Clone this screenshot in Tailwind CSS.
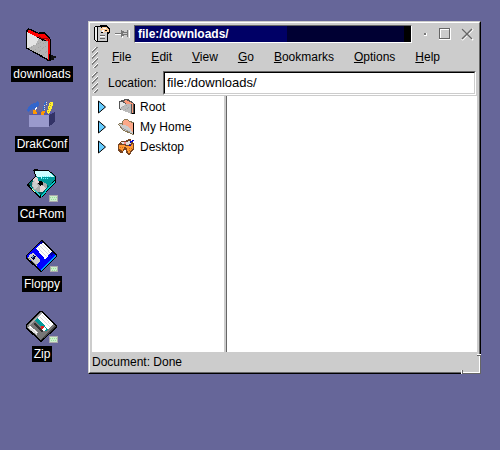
<!DOCTYPE html>
<html lang="en">
<head>
  <meta charset="UTF-8" />
  <meta name="viewport" content="width=device-width, initial-scale=1.0" />
  <title>file:/downloads/</title>
  <script src="https://cdn.jsdelivr.net/npm/@tailwindcss/browser@4"></script>
</head>

<body class="bg-[#666699] font-['Liberation_Sans',Arial,sans-serif] text-xs text-black">
  <div class="flex h-screen overflow-hidden">

    <!-- desktop icons -->
    <nav class="flex w-[84px] shrink-0 flex-col items-center gap-[14px] pt-[26px] leading-4 text-white">
      <a href="#downloads" class="flex flex-col items-center">
        <svg class="h-10 w-12" viewBox="54 33 144 120" shape-rendering="crispEdges">
          <path d="M147 120h12v3h9v6h-6v6h-12z" fill="#111" />
          <path d="M78 46l6-6 7 1 24 12 7-1h12l17 18 2 10-1 57h-9l-65-37z" fill="#000" />
          <path d="M83 46l5-2 30 14 7-2 8 1 17 18-2 60-5 1V78l-24-9-36-17z" fill="#f00" />
          <path d="M81 51l38 20 6 6h19v55l-63-34z" fill="#b4b4b4" />
          <path d="M81 51l36 19-9 18-27 12z" fill="#e4e4e4" />
          <path d="M88 100l50-28M100 108l42-29M112 114l30-25M126 122l17-15" stroke="#999" stroke-width="2" stroke-dasharray="3 3" />
          <path d="M118 64l8 7h17l3 6" fill="none" stroke="#900" stroke-width="3" />
        </svg>
        <span class="bg-black px-[2px]">downloads</span>
      </a>
      <a href="#drakconf" class="flex flex-col items-center">
        <svg class="h-10 w-12" viewBox="54 18 144 120" shape-rendering="crispEdges">
          <path d="M87 75l18-9h60l-18 9z" fill="#5858a8" />
          <path d="M81 63l3-12 9-9 12-3 6-6 6 3v12l-9 6-9 3-9 3-6 6z" fill="#3366cc" />
          <path d="M99 60h9l3 12H99zM123 66l6-6 6 3-3 12h-9z" fill="#f90" />
          <path d="M105 58l6-5" stroke="#fff" stroke-width="3" />
          <path d="M130 62l3-15 6-12" stroke="#3366cc" stroke-width="5" fill="none" />
          <path d="M132 59l3-15M138 46l3-9" stroke="#ddd" stroke-width="3" stroke-dasharray="3 3" />
          <path d="M141 69l3-18 6-15h9v9l-6 15-6 12z" fill="#fe3" />
          <path d="M153 39l-3 12-6 15" stroke="#a80" stroke-width="2" stroke-dasharray="3 3" fill="none" />
          <path d="M87 75h60v35H87z" fill="#9999cc" />
          <path d="M147 75l18-9v30l-18 14z" fill="#333366" />
        </svg>
        <span class="bg-black px-[2px]">DrakConf</span>
      </a>
      <a href="#cdrom" class="flex flex-col items-center">
        <svg class="h-10 w-12" viewBox="54 18 144 120" shape-rendering="crispEdges">
          <path d="M81 72l25-24-7-18 6-2 41 2 22 19v18l-42 45-8 1-37-36z" fill="#000" />
          <path d="M85 73l30-29 48 17-40 46z" fill="#066" />
          <path d="M121 108l44-47v6l-40 43z" fill="#0cc" />
          <circle cx="119" cy="73" r="23" fill="#aaa" />
          <path d="M119 73l-22-12 8-8 12-4zM121 73l18 12-9 9-9 3z" fill="#e5d5d5" />
          <path d="M103 60l-6 16 8 12 10-10z" fill="#ccc" />
          <path d="M103 32h42l21 18v6l-20 24-12-12-18-5z" fill="#099" />
          <path d="M103 32h42l19 18h-24l-15 3-15-3z" fill="#cff" />
          <path d="M126 50h30M123 56h24" stroke="#6ff" stroke-width="3" stroke-dasharray="3 3" />
          <circle cx="122" cy="70" r="7" fill="#000" />
          <path d="M90 78l31 29" stroke="#3cc" stroke-width="3" />
          <path d="M95 84l9 8v5l-9-8z" fill="#ff9" />
          <path d="M147 105h27v21h-27z" fill="#aaa" />
          <path d="M150 108h21v15h-21z" fill="#cec" />
          <path d="M150 111h21M153 117h18" stroke="#9d9" stroke-width="3" stroke-dasharray="3 3" />
        </svg>
        <span class="bg-black px-[2px]">Cd-Rom</span>
      </a>
      <a href="#floppy" class="flex flex-col items-center">
        <svg class="h-10 w-12" viewBox="54 12 144 120" shape-rendering="crispEdges">
          <path d="M78 69l45-45h5l43 42v8l-44 45h-7L78 79z" fill="#000" />
          <path d="M81 71l43-43 43 42-43 45-43-39z" fill="#00f" />
          <path d="M122 114l45-45v5l-42 42z" fill="#09f" />
          <path d="M124 28l38 37-6 7-39-38z" fill="#009" />
          <path d="M108 49l21-18 26 27-19 25z" fill="#fff" />
          <path d="M113 45l27 30M119 40l26 28M125 35l25 27" stroke="#ccc" stroke-width="2" />
          <path d="M86 72l12-10 24 22-12 17-25-21z" fill="#ccc" />
          <path d="M86 78l24 22" stroke="#888" stroke-width="3" />
          <path d="M93 75l7-6 8 5-7 10z" fill="#003" />
          <path d="M96 76l5-3" stroke="#69c" stroke-width="3" />
          <path d="M150 102h24v18h-24z" fill="#aaa" />
          <path d="M153 105h18v12h-18z" fill="#cec" />
          <path d="M153 108h18M156 114h15" stroke="#9d9" stroke-width="3" stroke-dasharray="3 3" />
        </svg>
        <span class="bg-black px-[2px]">Floppy</span>
      </a>
      <a href="#zip" class="flex flex-col items-center">
        <svg class="h-10 w-12" viewBox="54 12 144 120" shape-rendering="crispEdges">
          <path d="M78 69l43-43h6l44 44v6l-45 43h-6L78 79z" fill="#000" />
          <path d="M81 71l43-43 43 44-43 43-43-39z" fill="#777" />
          <path d="M84 69l39-39 4 4-39 39z" fill="#aaa" />
          <path d="M104 56l22-22 34 33-22 22z" fill="#099" />
          <path d="M114 48l14-15 32 34-16 15z" fill="#fff" />
          <path d="M120 45l28 29M126 39l26 28" stroke="#ccc" stroke-width="2" />
          <path d="M104 61l-3 6 25 24 6-4z" fill="#333" />
          <path d="M122 71h9v9h-9z" fill="#d22" />
          <path d="M125 83l7-8 6 6-7 8z" fill="#fff" />
          <path d="M84 75l7-4 22 20-4 8-23-19z" fill="#ddd" />
          <path d="M90 73l22 21" stroke="#fff" stroke-width="3" />
          <path d="M124 113l43-41" stroke="#444" stroke-width="4" />
          <path d="M147 102h27v21h-27z" fill="#aaa" />
          <path d="M150 105h21v15h-21z" fill="#cec" />
          <path d="M150 108h21M153 114h18" stroke="#9d9" stroke-width="3" stroke-dasharray="3 3" />
        </svg>
        <span class="bg-black px-[2px]">Zip</span>
      </a>
    </nav>

    <!-- file manager window -->
    <main class="relative mt-[21px] mr-[19px] mb-[76px] ml-1 flex min-w-0 flex-1 border border-t-[#cccccc] border-r-black border-b-black border-l-[#cccccc]">
      <div class="flex min-w-0 flex-1 flex-col border border-t-white border-r-[#666666] border-b-[#666666] border-l-white bg-[#cccccc]">

        <header class="flex h-[22px] items-center pr-1 pl-1">
          <button class="h-[18px] w-4" aria-label="Window menu">
            <svg class="h-[18px] w-4" viewBox="27 30 48 54" shape-rendering="crispEdges">
              <path d="M30 33h12l3-3h18l12 9v12l-6 6v24H36l-9-6V36z" fill="#000" />
              <path d="M30 36h6v42l-6-3z" fill="#eee" />
              <path d="M39 36h9v6h18v36H39z" fill="#ccc" />
              <path d="M45 42l6-6h12l9 6v9H60l-6 3z" fill="#fc9" />
              <path d="M54 39h9v3h-9zM51 45h6v6h-6z" fill="#fff" />
              <path d="M60 46h6M48 53h6" stroke="#000" stroke-width="3" />
              <path d="M45 61h15v6H45z" fill="#fff" />
              <path d="M45 60h15M45 70h15" stroke="#666" stroke-width="3" />
            </svg>
          </button>
          <button class="ml-1 h-[18px] w-4" aria-label="Sticky">
            <svg class="h-[18px] w-4" viewBox="84 30 48 54" shape-rendering="crispEdges">
              <path d="M87 58h18M109 69V48M129 45v24" stroke="#fff" stroke-width="3" />
              <path d="M87 55h18" stroke="#777" stroke-width="3" />
              <path d="M105 45h3v21h-3zM108 48h3l3 3h6l3-3v-3h3v21h-3v-3l-3-3h-6l-3 3h-3z" fill="#777" />
              <path d="M111 54h12v3h-12z" fill="#ccc" />
            </svg>
          </button>
          <h1 class="ml-1 h-[18px] min-w-0 flex-1 border border-t-[#666666] border-r-white border-b-white border-l-[#666666] bg-linear-to-r from-[#000066] from-55% via-[#000033] via-55% to-[#000033] to-98% pl-[3px] font-bold leading-4 text-white">
            <span class="flex justify-between">file:/downloads/<i class="h-4 w-[7px] bg-black"></i></span>
          </h1>
          <div class="ml-[3px] flex">
            <button class="h-[18px] w-5" aria-label="Minimize">
              <svg class="h-[18px] w-5" viewBox="0 0 20 18" shape-rendering="crispEdges">
                <path d="M9 8h3v3H9z" fill="#fff" />
                <path d="M9 8h2v2H9z" fill="#777" />
              </svg>
            </button>
            <button class="h-[18px] w-5" aria-label="Maximize">
              <svg class="h-[18px] w-5" viewBox="0 0 20 18" shape-rendering="crispEdges">
                <path d="M5.500 4.500h9v9h-9z" fill="none" stroke="#fff" />
                <path d="M4.500 3.500h10v10h-10z" fill="none" stroke="#666" />
                <path d="M4 14.500h11.500V3" fill="none" stroke="#fff" />
              </svg>
            </button>
            <button class="h-[18px] w-5" aria-label="Close">
              <svg class="h-[18px] w-5" viewBox="0 0 20 18">
                <path d="M7 4l11 11M18 4L7 15" stroke="#fff" stroke-width="2" />
                <path d="M7 4l10 10M17 4L7 14" stroke="#666" stroke-width="1.500" />
              </svg>
            </button>
          </div>
        </header>

        <div class="flex h-6 items-center pl-[2px]">
          <svg class="h-[21px] w-[6px]" shape-rendering="crispEdges" aria-hidden="true">
            <defs>
              <pattern id="grip" width="6" height="6" patternUnits="userSpaceOnUse">
                <path d="M0 3h1v1H0zM1 2h1v1H1zM2 1h1v1H2zM3 0h1v1H3zM4 5h1v1H4zM5 4h1v1H5z" fill="#fff" />
                <path d="M0 4h1v2H0zM1 3h1v2H1zM2 2h1v2H2zM3 1h1v2H3zM4 0h1v2H4zM5 5h1v1H5zM5 0h1v1H5z" fill="#808080" />
              </pattern>
            </defs>
            <rect width="6" height="21" fill="url(#grip)" />
          </svg>
          <div class="ml-[14px] flex gap-5">
            <button><u>F</u>ile</button>
            <button><u>E</u>dit</button>
            <button><u>V</u>iew</button>
            <button><u>G</u>o</button>
            <button><u>B</u>ookmarks</button>
            <button><u>O</u>ptions</button>
            <button><u>H</u>elp</button>
          </div>
        </div>

        <div class="flex h-[27px] items-center pr-[3px] pl-[2px]">
          <svg class="h-[21px] w-[6px]" shape-rendering="crispEdges" aria-hidden="true">
            <rect width="6" height="21" fill="url(#grip)" />
          </svg>
          <label for="location" class="ml-[10px] w-[55px]">Location:</label>
          <div class="flex h-6 min-w-0 flex-1 border border-t-[#666666] border-r-white border-b-white border-l-[#666666]">
            <input id="location" type="text" value="file:/downloads/" class="w-full min-w-0 border border-t-black border-r-[#cccccc] border-b-[#cccccc] border-l-black bg-white pl-[2px] text-[13px] outline-none" />
          </div>
        </div>

        <div class="flex min-h-0 flex-1 pr-[2px] pl-[2px]">
          <ul class="w-[132px] shrink-0 bg-white pt-px">
            <li>
              <button class="flex h-5 w-full items-center pl-[6px]">
                <svg class="h-[14px] w-2" viewBox="0 0 8 14"><path d="M.5 1v12L7.500 7z" fill="#6cf" stroke="#000" /></svg>
                <svg class="ml-3 h-[18px] w-[18px]" viewBox="99 21 54 54" shape-rendering="crispEdges">
                  <path d="M102 30l9-3 9-3h9l15 9 3 6v24l3 6h-9l-39-15z" fill="#555" />
                  <path d="M105 33h6l12 6h15v30l-33-15z" fill="#bbb" />
                  <path d="M105 33h6l12 6-18 12z" fill="#e5e5e5" />
                  <path d="M114 30l9-3 6 3 12 6 3 3v27h-3V39h-15z" fill="#fb9b7b" />
                  <path d="M108 51l18-9M120 57l15-9" stroke="#999" stroke-width="2" stroke-dasharray="3 3" />
                  <path d="M147 39v27h-6" stroke="#000" stroke-width="3" fill="none" />
                </svg>
                <span class="ml-1">Root</span>
              </button>
            </li>
            <li>
              <button class="flex h-5 w-full items-center pl-[6px]">
                <svg class="h-[14px] w-2" viewBox="0 0 8 14"><path d="M.5 1v12L7.500 7z" fill="#6cf" stroke="#000" /></svg>
                <svg class="ml-3 h-[18px] w-[18px]" viewBox="99 81 54 54" shape-rendering="crispEdges">
                  <path d="M111 90l9-6h6l6 5 12 3 3 3v36h-6l-30-14-12-18 3-3 9 1z" fill="#875" />
                  <path d="M114 90l6-3h6l6 6 12 3v30l-12-18-18-6z" fill="#fca888" />
                  <path d="M102 99l18 3 12 6 12 18v3l-30-14z" fill="#ccc" />
                  <path d="M107 109l27 14" stroke="#888" stroke-width="2" />
                  <path d="M146 96v33" stroke="#000" stroke-width="3" />
                </svg>
                <span class="ml-1">My Home</span>
              </button>
            </li>
            <li>
              <button class="flex h-5 w-full items-center pl-[6px]">
                <svg class="h-[14px] w-2" viewBox="0 0 8 14"><path d="M.5 1v12L7.500 7z" fill="#6cf" stroke="#000" /></svg>
                <svg class="ml-3 h-[18px] w-[18px]" viewBox="99 141 54 54" shape-rendering="crispEdges">
                  <path d="M99 159l9-9h12l12-6h6v6l9 6v18l-9 9v6l-9 3-6-6v-9h-6l-3 9h-6l-9-6z" fill="#742" />
                  <path d="M102 162h12l12 3 18-6v12l-9 9v6h-6l-3-15-9-3-3 12-12-6z" fill="#f93" />
                  <path d="M105 156l6-3h12l9-3 9 6-12 6-12-3z" fill="#ddd" />
                  <path d="M105 168l9 3M105 174l6 6M132 171h9M132 177h6" stroke="#b50" stroke-width="2" stroke-dasharray="3 3" />
                  <path d="M117 153h6v6h-6z" fill="#f88" />
                  <path d="M135 156v-6h6v-3h6M132 163h6" stroke="#00c" stroke-width="3" fill="none" />
                </svg>
                <span class="ml-1">Desktop</span>
              </button>
            </li>
          </ul>
          <div class="w-[3px] shrink-0 border-r border-[#666666] bg-[#cccccc]"></div>
          <section class="min-w-0 flex-1 bg-white"></section>
        </div>

        <footer class="h-5 pl-[2px] leading-5">Document: Done</footer>
      </div>

      <!-- resize corner -->
      <div class="absolute -right-px -bottom-px h-5 w-5 border-r border-b border-[#666666]">
        <div class="h-full w-full border-r border-b border-white"></div>
        <i class="absolute top-0 -right-px h-px w-1 bg-white"></i>
        <i class="absolute top-px -right-px h-px w-1 bg-[#666666]"></i>
        <i class="absolute -bottom-px left-0 h-1 w-px bg-white"></i>
        <i class="absolute -bottom-px left-px h-1 w-px bg-[#666666]"></i>
      </div>
    </main>
  </div>
</body>
</html>
